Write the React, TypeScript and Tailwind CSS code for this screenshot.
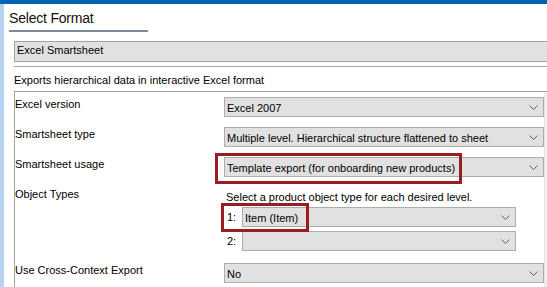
const font = { fontFamily: '"Liberation Sans", Arial, sans-serif' }

function Chevron() {
  return (
    <svg width="9" height="5" viewBox="0 0 9 5" className="shrink-0">
      <path d="M0.5 0.5 L4.5 4.5 L8.5 0.5" fill="none" stroke="#5f5f5f" strokeWidth="1" />
    </svg>
  )
}

function Select({ value, className = "" }: { value?: string; className?: string }) {
  return (
    <div
      className={`h-[20px] flex items-center justify-between bg-[#e1e1e1] border border-[#adadad] pl-[2px] pr-[5px] ${className}`}
    >
      <span className="text-[11px] leading-[18px] text-black whitespace-nowrap pt-[1px]">{value}</span>
      <Chevron />
    </div>
  )
}

function Label({ children }: { children: React.ReactNode }) {
  return <div className="text-[11px] leading-[14px] text-black whitespace-nowrap">{children}</div>
}

export default function App() {
  return (
    <div className="relative w-[547px] h-[287px] overflow-hidden bg-white flex flex-col" style={font}>
      <div className="h-[4px] bg-[#0063b1] shrink-0" />
      <div className="flex flex-1 min-h-0">
        <div className="w-[4px] bg-[#b7d2ef] shrink-0" />
        <div className="flex-1 flex flex-col min-w-0">
          <div className="pl-[5px] pt-[5px] text-[14px] leading-[18px] text-[#111] tracking-[-0.2px]">Select Format</div>
          <div className="ml-[5px] mt-[3px] h-[2px] w-[139px] bg-[#7d8b98]" />

          <div className="ml-[10px] mt-[9px] h-[21px] bg-[#e1e1e1] border-y border-l border-[#a3a3a3] pl-[2px] flex items-start">
            <span className="text-[11px] leading-[17px] text-black">Excel Smartsheet</span>
          </div>
          <div className="ml-[10px] mt-[4px] h-[1px] bg-[#a3a3a3]" />
          <div className="ml-[10px] mt-[5px] text-[11px] leading-[16px] text-black">
            Exports hierarchical data in interactive Excel format
          </div>

          {/* settings panel */}
          <div className="ml-[10px] mt-[3px] flex-1 flex border-t border-l border-[#a3a3a3]">
            <div className="flex-1 pt-[5px]">
              <div className="grid grid-cols-[209px_320px] items-start">
                <Label>Excel version</Label>
                <Select value="Excel 2007" />
              </div>
              <div className="grid grid-cols-[209px_320px] items-start mt-[10px]">
                <Label>Smartsheet type</Label>
                <Select value="Multiple level. Hierarchical structure flattened to sheet" />
              </div>
              <div className="grid grid-cols-[209px_320px] items-start mt-[10px]">
                <Label>Smartsheet usage</Label>
                <Select value="Template export (for onboarding new products)" />
              </div>
              <div className="grid grid-cols-[209px_320px] items-start mt-[10px]">
                <Label>Object Types</Label>
                <div className="pt-[3px] pl-[2px]">
                  <div className="text-[11px] leading-[14px] text-black whitespace-nowrap">
                    Select a product object type for each desired level.
                  </div>
                  <div className="flex items-center mt-[3px]">
                    <span className="w-[16px] text-[11px] leading-[14px] text-black pl-[1px]">1:</span>
                    <Select value="Item (Item)" className="w-[274px]" />
                  </div>
                  <div className="flex items-center mt-[4px]">
                    <span className="w-[16px] text-[11px] leading-[14px] text-black pl-[1px]">2:</span>
                    <Select className="w-[274px]" />
                  </div>
                </div>
              </div>
              <div className="grid grid-cols-[209px_320px] items-start mt-[12px]">
                <Label>Use Cross-Context Export</Label>
                <Select value="No" />
              </div>
            </div>
            <div className="w-[3px] border-l border-[#e6e6e6] bg-[#f0f0f0]" />
          </div>
        </div>
      </div>

      {/* highlight boxes */}
      <div className="absolute left-[215px] top-[153px] w-[247px] h-[31px] border-[3px] border-[#9b1c23]" />
      <div className="absolute left-[221px] top-[203px] w-[88px] h-[29px] border-[3px] border-[#9b1c23]" />
    </div>
  )
}
